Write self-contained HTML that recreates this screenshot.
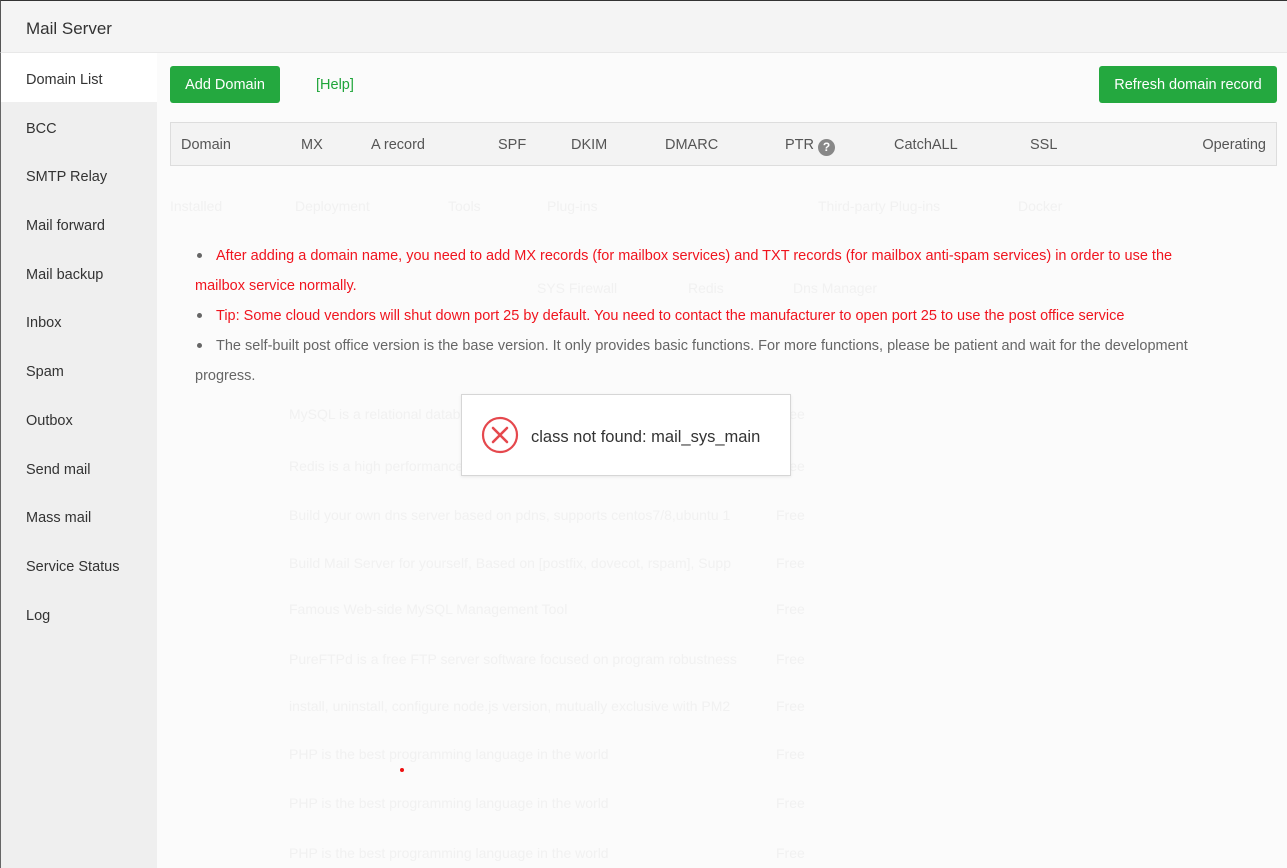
<!DOCTYPE html>
<html><head><meta charset="utf-8"><style>
*{margin:0;padding:0;box-sizing:border-box}
body{width:1287px;height:868px;overflow:hidden;background:#fbfbfb;font-family:"Liberation Sans",sans-serif;position:relative;color:#333}
.abs{position:absolute;white-space:nowrap}
.bg{color:#f1f1f1;font-size:14px}
.hdr{position:absolute;left:0;top:0;width:1287px;height:53px;background:#f4f4f4;border-top:1px solid #333;border-left:1px solid #555;border-bottom:1px solid #e8e8e8}
.side{position:absolute;left:1px;top:53px;width:156px;height:815px;background:#efefef}
.side div{height:48.7px;line-height:54px;padding-left:25px;font-size:14.5px;color:#333}
.side div.act{background:#fff}
.btn{position:absolute;background:#24a83f;color:#fff;font-size:14.5px;border-radius:3px;text-align:center;line-height:38px;height:37px}
.th{position:absolute;left:170px;top:122px;width:1107px;height:44px;background:#f3f3f3;border:1px solid #ddd}
.th span{position:absolute;top:14px;font-size:14.5px;color:#555}
.note{position:absolute;left:195px;font-size:14.5px;line-height:30px;width:1030px}
.dot{display:inline-block;width:5px;height:5px;border-radius:50%;background:#666;margin:0 14px 2px 2px}
</style></head><body>
<div class="abs bg" style="left:170px;top:198px">Installed</div>
<div class="abs bg" style="left:295px;top:198px">Deployment</div>
<div class="abs bg" style="left:448px;top:198px">Tools</div>
<div class="abs bg" style="left:547px;top:198px">Plug-ins</div>
<div class="abs bg" style="left:818px;top:198px">Third-party Plug-ins</div>
<div class="abs bg" style="left:1018px;top:198px">Docker</div>
<div class="abs bg" style="left:537px;top:280px">SYS Firewall</div>
<div class="abs bg" style="left:688px;top:280px">Redis</div>
<div class="abs bg" style="left:793px;top:280px">Dns Manager</div>
<div class="abs bg" style="left:289px;top:406px">MySQL is a relational database</div><div class="abs bg" style="left:776px;top:406px">Free</div>
<div class="abs bg" style="left:289px;top:458px">Redis is a high performance</div><div class="abs bg" style="left:776px;top:458px">Free</div>
<div class="abs bg" style="left:289px;top:507px">Build your own dns server based on pdns, supports centos7/8,ubuntu 1</div><div class="abs bg" style="left:776px;top:507px">Free</div>
<div class="abs bg" style="left:289px;top:555px">Build Mail Server for yourself, Based on [postfix, dovecot, rspam], Supp</div><div class="abs bg" style="left:776px;top:555px">Free</div>
<div class="abs bg" style="left:289px;top:601px">Famous Web-side MySQL Management Tool</div><div class="abs bg" style="left:776px;top:601px">Free</div>
<div class="abs bg" style="left:289px;top:651px">PureFTPd is a free FTP server software focused on program robustness</div><div class="abs bg" style="left:776px;top:651px">Free</div>
<div class="abs bg" style="left:289px;top:698px">install, uninstall, configure node.js version, mutually exclusive with PM2</div><div class="abs bg" style="left:776px;top:698px">Free</div>
<div class="abs bg" style="left:289px;top:746px">PHP is the best programming language in the world</div><div class="abs bg" style="left:776px;top:746px">Free</div>
<div class="abs bg" style="left:289px;top:795px">PHP is the best programming language in the world</div><div class="abs bg" style="left:776px;top:795px">Free</div>
<div class="abs bg" style="left:289px;top:845px">PHP is the best programming language in the world</div><div class="abs bg" style="left:776px;top:845px">Free</div>

<div class="hdr"><div class="abs" style="left:25px;top:18px;font-size:17px;color:#333">Mail Server</div></div>
<div class="abs" style="left:0;top:53px;width:1px;height:815px;background:#666"></div>
<div class="side">
<div class="act">Domain List</div><div>BCC</div><div>SMTP Relay</div><div>Mail forward</div><div>Mail backup</div><div>Inbox</div><div>Spam</div><div>Outbox</div><div>Send mail</div><div>Mass mail</div><div>Service Status</div><div>Log</div>
</div>
<div class="btn" style="left:170px;top:66px;width:110px">Add Domain</div>
<div class="abs" style="left:316px;top:77px;font-size:14.5px;color:#20a53a">[Help]</div>
<div class="btn" style="left:1099px;top:66px;width:178px">Refresh domain record</div>
<div class="th">
<span style="left:10px">Domain</span><span style="left:130px">MX</span><span style="left:200px">A record</span><span style="left:327px">SPF</span><span style="left:400px">DKIM</span><span style="left:494px">DMARC</span><span style="left:614px">PTR <i style="display:inline-block;width:17px;height:17px;border-radius:50%;background:#888;color:#fff;font-style:normal;font-size:12px;text-align:center;line-height:17px;font-weight:bold;vertical-align:-2px">?</i></span><span style="left:723px">CatchALL</span><span style="left:859px">SSL</span><span style="right:10px">Operating</span>
</div>
<div class="note" style="top:241px;color:#f0141e"><span class="dot"></span>After adding a domain name, you need to add MX records (for mailbox services) and TXT records (for mailbox anti-spam services) in order to use the mailbox service normally.</div>
<div class="note" style="top:301px;color:#f0141e;width:1090px"><span class="dot"></span>Tip: Some cloud vendors will shut down port 25 by default. You need to contact the manufacturer to open port 25 to use the post office service</div>
<div class="note" style="top:331px;color:#666"><span class="dot"></span>The self-built post office version is the base version. It only provides basic functions. For more functions, please be patient and wait for the development progress.</div>
<div class="abs" style="left:461px;top:394px;width:330px;height:82px;background:#fff;border:1px solid #d6d6d6;box-shadow:0 1px 3px rgba(0,0,0,.08)">
<svg style="position:absolute;left:19px;top:21px" width="38" height="38" viewBox="0 0 38 38"><circle cx="19" cy="19" r="17" fill="none" stroke="#e5484d" stroke-width="2.2"/><path d="M12 12L26 26M26 12L12 26" stroke="#e5484d" stroke-width="2.6" stroke-linecap="round"/></svg>
<div class="abs" style="left:69px;top:33px;font-size:16.5px;color:#333">class not found: mail_sys_main</div>
</div>
<div class="abs" style="left:400px;top:768px;width:4px;height:4px;border-radius:50%;background:#e11"></div>
</body></html>
